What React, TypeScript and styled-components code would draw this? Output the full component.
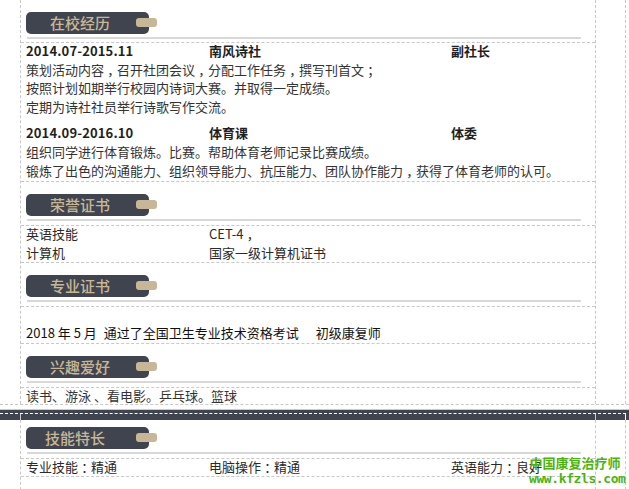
import React from "react";
import styled, { createGlobalStyle } from "styled-components";

const Global = createGlobalStyle`
  html, body { margin: 0; padding: 0; background: #fff; overflow: hidden; }
  body { font-family: "Noto Sans CJK SC", "Liberation Sans", sans-serif; font-size: 13px; color: #2b2b2b; }
`;

const Viewport = styled.div`
  position: relative;
  width: 629px;
  height: 489px;
  overflow: hidden;
`;

const Sheet = styled.div`
  width: 626px;
  box-sizing: border-box;
  padding-left: 20px;
  border-right: 1px dashed #c8c8c8;
`;

const Table = styled.div`
  width: 576px;
  box-sizing: border-box;
  border-left: 1px dashed #c8c8c8;
  border-right: 1px dashed #c8c8c8;
`;

const Cell = styled.div<{ $height: number; $end?: boolean }>`
  display: flow-root;
  height: ${(p) => p.$height}px;
  box-sizing: border-box;
  padding: 0 5px;
  border-bottom: ${(p) => (p.$end ? "none" : "1px dashed #c8c8c8")};
`;

const Header = styled(Cell)<{ $top: number }>`
  padding-top: ${(p) => p.$top}px;
`;

const Pill = styled.div<{ $inset: number }>`
  position: relative;
  width: 123px;
  height: 22px;
  border-radius: 5px;
  background: #40444e;
  color: #c8b796;
  font-size: 15px;
  font-weight: 500;
  line-height: 22px;
  padding-left: ${(p) => p.$inset}px;
  box-sizing: border-box;
`;

const Tag = styled.span`
  position: absolute;
  left: 110px;
  top: 6px;
  width: 21px;
  height: 9px;
  border-radius: 3px;
  background: #c8b796;
`;

const Rule = styled.div`
  height: 2px;
  width: 554px;
  margin: 3px 0 0 1px;
  background: #d8d8d8;
`;

const Row = styled.div<{ $bold?: boolean }>`
  display: grid;
  grid-template-columns: 183px 242px 1fr;
  height: 18.6px;
  line-height: 18.6px;
  white-space: nowrap;
  font-weight: ${(p) => (p.$bold ? 700 : 400)};
  color: ${(p) => (p.$bold ? "#1f1f1f" : "#2a2a2a")};
`;

const Line = styled.div<{ $dark?: boolean }>`
  height: 18.6px;
  line-height: 18.6px;
  white-space: nowrap;
  color: ${(p) => (p.$dark ? "#111" : "#333")};
`;

const Block = styled.div<{ $shift: number }>`
  margin-top: ${(p) => p.$shift}px;
`;

const Dates = styled.span`
  letter-spacing: 0.14px;
`;

const Punct = styled.span`
  font-feature-settings: "halt";
  padding: 0 0.25em;
`;

const Spaced = styled.span<{ $left: number }>`
  margin-left: ${(p) => p.$left}px;
`;

const Break = styled.div`
  height: 5px;
  box-sizing: border-box;
  border-top: 1px dashed #c8c8c8;
  width: 100%;
`;

const Band = styled.div`
  height: 11px;
  background: linear-gradient(#c9cbd0 0, #c9cbd0 1px, #40444e 1px);
  position: relative;
  &::after {
    content: "";
    position: absolute;
    left: 0;
    top: 4px;
    width: 626px;
    border-top: 1px dashed #fff;
  }
`;

const Tick = styled.span<{ $left: number; $light?: boolean }>`
  position: absolute;
  left: ${(p) => p.$left}px;
  top: 5px;
  height: 6px;
  border-left: 1px dashed ${(p) => (p.$light ? "#fff" : "#c8c8c8")};
`;

const Mark = styled.div`
  position: absolute;
  left: 529px;
  top: 455px;
  color: #4cb40c;
  font-weight: 700;
  text-align: center;
  width: 92px;
`;

const MarkTitle = styled.div`
  font-size: 13px;
  line-height: 16px;
  white-space: nowrap;
`;

const MarkUrl = styled.div`
  font-family: "DejaVu Sans Mono", "Liberation Mono", monospace;
  font-size: 13px;
  line-height: 15px;
  white-space: nowrap;
  letter-spacing: -0.4px;
`;

const Heading = ({ text, height, top, inset = 24 }: { text: string; height: number; top: number; inset?: number }) => (
  <Header $height={height} $top={top}>
    <Pill $inset={inset}>
      {text}
      <Tag />
    </Pill>
    <Rule />
  </Header>
);

const C = () => <Punct>，</Punct>;
const Colon = () => <Punct>：</Punct>;

export default function App() {
  return (
    <Viewport>
      <Global />
      <Sheet>
        <Table>
          <Heading text="在校经历" height={43} top={12} />
          <Cell $height={139}>
            <Block $shift={-1}>
              <Row $bold>
                <Dates>2014.07-2015.11</Dates>
                <span>南风诗社</span>
                <span>副社长</span>
              </Row>
              <Line>策划活动内容<C />召开社团会议<C />分配工作任务<C />撰写刊首文<Punct>；</Punct></Line>
              <Line>按照计划如期举行校园内诗词大赛。并取得一定成绩。</Line>
              <Line>定期为诗社社员举行诗歌写作交流。</Line>
            </Block>
            <Block $shift={8}>
              <Row $bold>
                <Dates>2014.09-2016.10</Dates>
                <span>体育课</span>
                <span>体委</span>
              </Row>
              <Line>组织同学进行体育锻炼。比赛。帮助体育老师记录比赛成绩。</Line>
              <Line>锻炼了出色的沟通能力、组织领导能力、抗压能力、团队协作能力<C />获得了体育老师的认可。</Line>
            </Block>
          </Cell>
          <Heading text="荣誉证书" height={44} top={12} />
          <Cell $height={37}>
            <Block $shift={-1}>
              <Row>
                <span>英语技能</span>
                <span>CET-4<C /></span>
              </Row>
              <Row>
                <span>计算机</span>
                <span>国家一级计算机证书</span>
              </Row>
            </Block>
          </Cell>
          <Heading text="专业证书" height={44} top={12} />
          <Cell $height={37}>
            <Block $shift={17}>
              <Line $dark>
                2018 年 5 月<Spaced $left={7}>通过了全国卫生专业技术资格考试</Spaced>
                <Spaced $left={17}>初级康复师</Spaced>
              </Line>
            </Block>
          </Cell>
          <Heading text="兴趣爱好" height={44} top={12} />
          <Cell $height={16} $end>
            <Block $shift={-1}>
              <Line>读书、游泳 、看电影。乒乓球。篮球</Line>
            </Block>
          </Cell>
        </Table>
      </Sheet>
      <Break />
      <Band>
        <Tick $left={20} />
        <Tick $left={595} />
        <Tick $left={625} $light />
      </Band>
      <Sheet>
        <Table>
          <Heading text="技能特长" height={39} top={7} inset={19} />
          <Cell $height={18}>
            <Block $shift={-1}>
              <Row>
                <span>专业技能<Colon />精通</span>
                <span>电脑操作<Colon />精通</span>
                <span>英语能力<Colon />良好</span>
              </Row>
            </Block>
          </Cell>
          <Cell $height={13} $end />
        </Table>
      </Sheet>
      <Mark>
        <MarkTitle>中国康复治疗师</MarkTitle>
        <MarkUrl>www.kfzls.com</MarkUrl>
      </Mark>
    </Viewport>
  );
}
